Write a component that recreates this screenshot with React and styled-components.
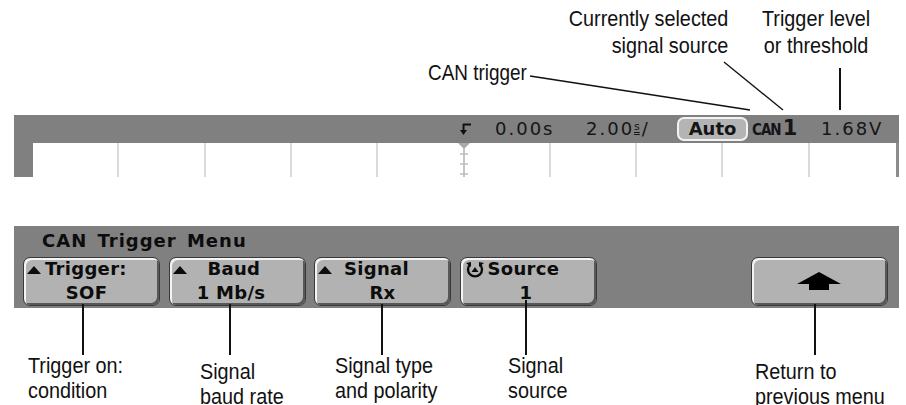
import React from "react";
import styled, { createGlobalStyle } from "styled-components";

const GlobalStyle = createGlobalStyle`
  html, body {
    margin: 0;
    padding: 0;
    background: #fff;
  }
  body {
    font-family: "Liberation Sans", Arial, sans-serif;
  }
`;

const Page = styled.div`
  position: relative;
  width: 906px;
  height: 405px;
  overflow: hidden;
  background: #fff;
  color: #111;
`;

// Callout text (condensed look: Arial widths squeezed)
const Notes = styled.header`
  height: 115px;
  box-sizing: border-box;
  padding-top: 5px;
`;

const NoteRow = styled.div`
  display: grid;
  grid-template-columns: 728px auto;
  column-gap: 34px;
`;

const Note = styled.div`
  font-size: 22px;
  line-height: 27px;
  text-align: ${(p) => p.$align || "left"};
  justify-self: ${(p) => (p.$align === "right" ? "end" : "start")};
  transform: scaleX(${(p) => p.$squeeze || 0.9});
  transform-origin: ${(p) => (p.$align === "right" ? "right" : "left")} center;
  white-space: nowrap;
`;

const CanNote = styled(Note)`
  margin-left: 428px;
`;

// Scope screen
const Screen = styled.section`
  margin-left: 14px;
  width: 885px;
`;

const StatusBar = styled.div`
  height: 28px;
  box-sizing: border-box;
  padding-left: 446px;
  background: #808080;
  display: grid;
  grid-template-columns: 35px 91px 91px 75px 69px auto;
  align-items: center;
  font-family: "DejaVu Sans", sans-serif;
  font-size: 18px;
  letter-spacing: 2px;
  color: #151515;
`;

const Readout = styled.span`
  display: inline-flex;
  align-items: center;
  white-space: nowrap;
  line-height: 20px;
`;

const TinyUnit = styled.span`
  font-size: 11px;
  letter-spacing: 0;
  text-decoration: underline double;
  text-underline-offset: 2px;
  margin: -4px 2px 0 0;
`;

const ModeBox = styled.span`
  display: inline-flex;
  align-items: center;
  justify-content: center;
  width: 71px;
  height: 24px;
  box-sizing: border-box;
  border: 2px solid #f2f2f2;
  border-radius: 7px;
  background: #b4b4b4;
  font-weight: bold;
  letter-spacing: 0;
`;

const SourceTag = styled.span`
  display: inline-flex;
  align-items: baseline;
  letter-spacing: 0;
`;

const SourceName = styled.span`
  font-family: "DejaVu Sans Condensed", "DejaVu Sans", sans-serif;
  font-weight: bold;
  font-size: 15px;
  letter-spacing: -1px;
  margin-right: 2px;
`;

const SourceNum = styled.span`
  font-weight: bold;
  font-size: 21px;
`;

const Graticule = styled.div`
  position: relative;
  height: 34px;
  display: grid;
  grid-template-columns: repeat(10, 1fr);
  border-left: 19px solid #808080;
  border-right: 3px solid #8c8c8c;
  background: #fff;
`;

const Division = styled.div`
  border-right: 2px solid ${(p) => (p.$hidden ? "transparent" : "#dadada")};
`;

const TriggerMark = styled.svg`
  position: absolute;
  top: 0;
  left: calc(50% - 9px);
`;

// Softkey menu
const Menu = styled.section`
  margin: 49px 0 0 14px;
  width: 885px;
  height: 82px;
  box-sizing: border-box;
  padding: 5px 0 0 9px;
  background: #808080;
  font-family: "DejaVu Sans", sans-serif;
  font-weight: bold;
  font-size: 18px;
  letter-spacing: 0.3px;
  color: #0c0c0c;
`;

const MenuTitle = styled.div`
  letter-spacing: 1px;
  line-height: 20px;
  padding-left: 19px;
  word-spacing: 3px;
`;

const Keys = styled.div`
  display: grid;
  grid-template-columns: repeat(6, 137px);
  column-gap: 8.5px;
  margin-top: 6px;
`;

const Key = styled.div`
  height: 49px;
  box-sizing: border-box;
  border: 1px solid #3a3a3a;
  border-radius: 7px;
  background: #b2b2b2;
  box-shadow: inset 2px 2px 0 #f4f4f4, inset -2px -2px 0 #585858;
  display: flex;
  flex-direction: column;
  padding-top: 2px;
  visibility: ${(p) => (p.$empty ? "hidden" : "visible")};
`;

const KeyLine = styled.div`
  display: flex;
  align-items: center;
  height: 18px;
  line-height: 18px;
  padding-left: ${(p) => p.$indent || 0}px;
  justify-content: ${(p) => (p.$center ? "center" : "flex-start")};
  padding-right: ${(p) => p.$pad || 0}px;
  white-space: nowrap;
`;

const SecondLine = styled(KeyLine)`
  margin-top: 6px;
`;

const ArrowLine = styled(KeyLine)`
  height: 24px;
  margin-top: 9px;
`;

const Caret = styled.span`
  width: 0;
  height: 0;
  border-left: 7px solid transparent;
  border-right: 7px solid transparent;
  border-bottom: 8px solid #0c0c0c;
  margin: 2px ${(p) => p.$gap || 5}px 0 3px;
  flex: none;
`;

const KeyText = styled.span`
  margin-left: ${(p) => p.$shift || 0}px;
`;

// Bottom callouts
const Labels = styled.div`
  display: grid;
  grid-template-columns: 172px 135px 173px 247px auto;
  padding-left: 28px;
  margin-top: 45px;
`;

const Label = styled.div`
  font-size: 22px;
  line-height: 25px;
  margin-top: ${(p) => p.$drop || 0}px;
  white-space: nowrap;
  transform: scaleX(0.9);
  transform-origin: left center;
`;

const Leaders = styled.svg`
  position: absolute;
  inset: 0;
  pointer-events: none;
`;

const TrigIcon = () => (
  <svg width="12" height="16" viewBox="0 0 12 16">
    <path d="M3 3.5h8" stroke="#111" strokeWidth="2" fill="none" />
    <path d="M3.5 3v7" stroke="#111" strokeWidth="2" fill="none" />
    <path d="M0 9h7l-3.5 5z" fill="#111" />
  </svg>
);

const KnobIcon = () => (
  <svg width="20" height="18" viewBox="0 0 20 18" style={{ marginRight: 3 }}>
    <path d="M5 4.5A7 7 0 1 0 15 4.5" stroke="#0c0c0c" strokeWidth="2.4" fill="none" />
    <path d="M1 3l5-1v5z" fill="#0c0c0c" />
    <path d="M19 3l-5-1v5z" fill="#0c0c0c" />
    <path d="M10 7l3.5 5h-7z" fill="#0c0c0c" />
  </svg>
);

const BackArrow = () => (
  <svg width="46" height="20" viewBox="0 0 46 20">
    <path d="M23 1L45 13H33v6H13v-6H1z" fill="#000" />
  </svg>
);

const App = () => {
  return (
    <Page>
      <GlobalStyle />
      <Notes>
        <NoteRow>
          <Note $align="right">
            Currently selected
            <br />
            signal source
          </Note>
          <Note $align="center">
            Trigger level
            <br />
            or threshold
          </Note>
        </NoteRow>
        <CanNote $squeeze={0.86}>CAN trigger</CanNote>
      </Notes>

      <Screen>
        <StatusBar>
          <Readout>
            <TrigIcon />
          </Readout>
          <Readout>0.00s</Readout>
          <Readout>
            2.00
            <TinyUnit>s</TinyUnit>/
          </Readout>
          <Readout>
            <ModeBox>Auto</ModeBox>
          </Readout>
          <Readout>
            <SourceTag>
              <SourceName>CAN</SourceName>
              <SourceNum>1</SourceNum>
            </SourceTag>
          </Readout>
          <Readout>1.68V</Readout>
        </StatusBar>
        <Graticule>
          {Array.from({ length: 10 }, (_, i) => (
            <Division key={i} $hidden={i === 4 || i === 9} />
          ))}
          <TriggerMark width="16" height="34" viewBox="0 0 16 34">
            <path d="M2 0h12l-6 6z" fill="#a9a9a9" />
            <path d="M8 5v29" stroke="#c4c4c4" strokeWidth="2" />
            <path d="M4 11h8M4 21h8M4 31h8" stroke="#bdbdbd" strokeWidth="1.5" />
          </TriggerMark>
        </Graticule>
      </Screen>

      <Menu>
        <MenuTitle>CAN Trigger Menu</MenuTitle>
        <Keys>
          <Key>
            <KeyLine>
              <Caret $gap={4} />
              <KeyText>Trigger:</KeyText>
            </KeyLine>
            <SecondLine $center $pad={10}>SOF</SecondLine>
          </Key>
          <Key>
            <KeyLine>
              <Caret />
              <KeyText $shift={16}>Baud</KeyText>
            </KeyLine>
            <SecondLine $center $pad={12}>1 Mb/s</SecondLine>
          </Key>
          <Key>
            <KeyLine>
              <Caret />
              <KeyText $shift={7}>Signal</KeyText>
            </KeyLine>
            <SecondLine $center>Rx</SecondLine>
          </Key>
          <Key>
            <KeyLine $indent={4}>
              <KnobIcon />
              <KeyText>Source</KeyText>
            </KeyLine>
            <SecondLine $center $pad={4}>1</SecondLine>
          </Key>
          <Key $empty />
          <Key>
            <ArrowLine $center>
              <BackArrow />
            </ArrowLine>
          </Key>
        </Keys>
      </Menu>

      <Labels>
        <Label>
          Trigger on:
          <br />
          condition
        </Label>
        <Label $drop={6}>
          Signal
          <br />
          baud rate
        </Label>
        <Label>
          Signal type
          <br />
          and polarity
        </Label>
        <Label>
          Signal
          <br />
          source
        </Label>
        <Label $drop={6}>
          Return to
          <br />
          previous menu
        </Label>
      </Labels>

      <Leaders width="906" height="405" viewBox="0 0 906 405">
        <g stroke="#111" fill="none">
          <path d="M530 76L750 110" strokeWidth="1.6" />
          <path d="M724 62L783 110" strokeWidth="1.3" />
          <path d="M840 68V110" strokeWidth="2" />
          <path d="M83 304V355M230 304V355M382 304V355M526 300V355M815 304V355" strokeWidth="2" />
        </g>
      </Leaders>
    </Page>
  );
};

export default App;
